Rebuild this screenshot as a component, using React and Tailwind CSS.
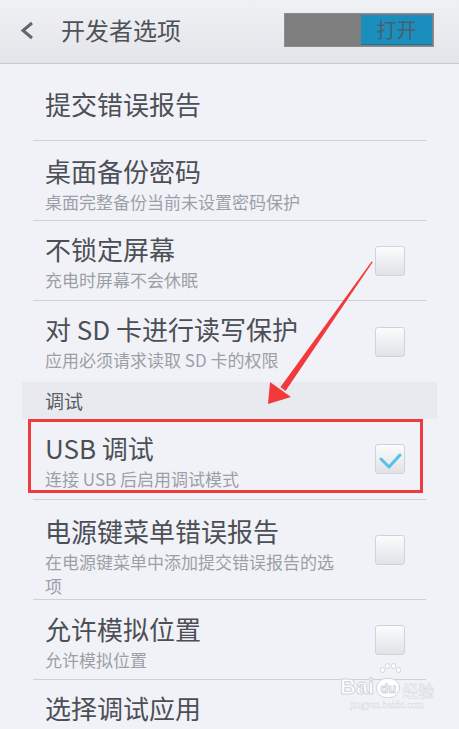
const FONT = { fontFamily: '"Noto Sans CJK SC", Roboto, sans-serif' };

const Checkbox = ({ checked }) => (
  <div className="w-[30px] h-[30px] rounded-[3px] border border-[#cfd2d9] bg-gradient-to-b from-[#fbfcfd] to-[#e0e2e6] flex items-center justify-center shrink-0">
    {checked && (
      <svg width="24" height="20" viewBox="0 0 24 20">
        <polyline points="3,10 11,18 22,6" fill="none" stroke="#57c1e4" strokeWidth="3" strokeLinecap="round" strokeLinejoin="round" />
      </svg>
    )}
  </div>
);

// one setting row: title, optional subtitle, optional checkbox
const Row = ({ title, sub, check, checked, h, pt, border = true, children }) => (
  <div className={`relative mx-[33px] flex justify-between ${border ? 'border-b border-[#cfd1d8]' : ''}`} style={{ height: h }}>
    <div className="pl-[12px]" style={{ paddingTop: pt }}>
      <div className="text-[26px] leading-none text-[#4c4f56] whitespace-nowrap">{title}</div>
      {sub && <div className="mt-[6px] w-[300px] text-[17px] leading-[24px] text-[#9c9fa7]">{sub}</div>}
    </div>
    {check && <div className="self-center mr-[21px]"><Checkbox checked={checked} /></div>}
    {children}
  </div>
);

export default function App() {
  return (
    <div className="relative w-[459px] h-[729px] overflow-hidden bg-[#f1f2f7]" style={FONT}>
      {/* header */}
      <div className="h-[64px] flex items-center border-b border-[#c6c8ce] bg-gradient-to-b from-[#eff1f4] to-[#e3e5ea]">
        <svg width="40" height="20" viewBox="0 0 40 20" className="ml-[12px] -mt-[1px]">
          <polyline points="20,2 11,9.5 20,17" fill="none" stroke="#62656c" strokeWidth="3" />
        </svg>
        <div className="ml-[9px] -mt-[3px] text-[24px] leading-none text-[#4e5159]">开发者选项</div>
        <div className="ml-auto mr-[25px] -mt-[3px] w-[150px] h-[34px] bg-[#7e7e7e] border border-[#8c8c8c] p-[1px] flex justify-end">
          <div className="w-[71px] h-full bg-[#1a8fbe] border-b border-[#157aa3] flex items-center justify-center text-[20px] leading-none text-[#4a5f6d]">打开</div>
        </div>
      </div>

      <Row title="提交错误报告" h={77} pt={27} />
      <Row title="桌面备份密码" sub="桌面完整备份当前未设置密码保护" h={80} pt={17} />
      <Row title="不锁定屏幕" sub="充电时屏幕不会休眠" h={80} pt={15} check />
      <Row title="对 SD 卡进行读写保护" sub="应用必须请求读取 SD 卡的权限" h={81} pt={15} check border={false} />

      {/* section header */}
      <div className="mx-[22px] h-[37px] bg-[#e8eaf0] pl-[23px] pt-[9px] text-[19px] leading-none text-[#595c63]">调试</div>

      <Row title="USB 调试" sub="连接 USB 后启用调试模式" h={81} pt={16} check checked>
        <div className="absolute -left-[5px] top-0 w-[395px] h-[74px] border-[3px] border-[#ef3b3d] pointer-events-none" />
      </Row>
      <Row title="电源键菜单错误报告" sub="在电源键菜单中添加提交错误报告的选项" h={100} pt={18} check />
      <Row title="允许模拟位置" sub="允许模拟位置" h={80} pt={16} check />
      <Row title="选择调试应用" h={60} pt={15} border={false} />

      {/* red annotation arrow */}
      <svg className="absolute left-0 top-0 pointer-events-none" width="459" height="729" viewBox="0 0 459 729">
        <polygon points="372.8,262 371.6,261.6 280.5,387 285.5,391" fill="#f23a3a" />
        <polygon points="268,404 270,382 291,397" fill="#f23a3a" />
      </svg>

      {/* watermark */}
      <div className="absolute left-[340px] top-[676px] flex flex-col items-center pointer-events-none">
        <div className="flex items-end text-white text-[22px] font-bold leading-none [-webkit-text-stroke:1px_#d2d4da]" style={{ fontFamily: 'Arial, "Liberation Sans", sans-serif' }}>
          <span>Bai</span>
          <span className="relative mx-[2px] w-[24px] h-[20px] rounded-full bg-white border border-[#d2d4da] flex items-center justify-center text-[13px]">
            du
            <span className="absolute -top-[12px] left-[3px] w-[5px] h-[6px] rounded-full bg-white border border-[#d2d4da]" />
            <span className="absolute -top-[16px] left-[8px] w-[5px] h-[6px] rounded-full bg-white border border-[#d2d4da]" />
            <span className="absolute -top-[16px] left-[14px] w-[5px] h-[6px] rounded-full bg-white border border-[#d2d4da]" />
            <span className="absolute -top-[12px] left-[19px] w-[5px] h-[6px] rounded-full bg-white border border-[#d2d4da]" />
          </span>
          <span className="text-[16px] font-normal [-webkit-text-stroke:0.5px_#d2d4da]" style={FONT}>经验</span>
        </div>
        <div className="mt-[2px] text-[10px] leading-none text-white [-webkit-text-stroke:0.4px_#d6d8de]" style={{ fontFamily: '"Liberation Serif", serif' }}>jingyan.baidu.com</div>
      </div>
    </div>
  );
}
